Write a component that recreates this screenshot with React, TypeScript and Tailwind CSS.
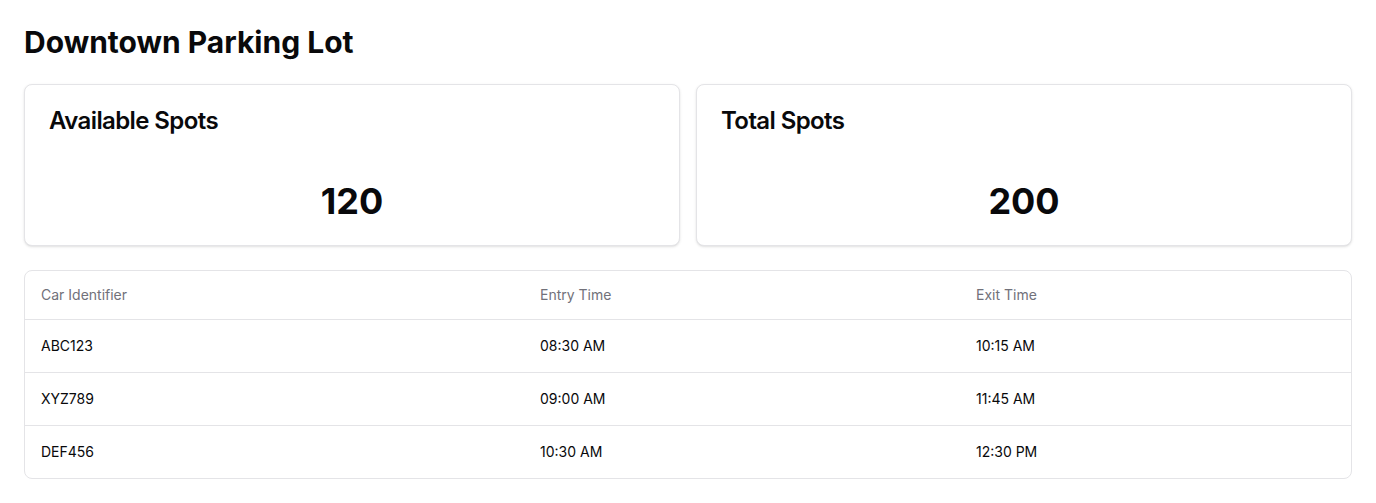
import React from "react";

const rows = [
  { id: "ABC123", entry: "08:30 AM", exit: "10:15 AM" },
  { id: "XYZ789", entry: "09:00 AM", exit: "11:45 AM" },
  { id: "DEF456", entry: "10:30 AM", exit: "12:30 PM" },
];

function StatCard({ title, value }: { title: string; value: string }) {
  return (
    <div className="flex-1 rounded-lg border border-[#e4e4e7] bg-white text-[#09090b] shadow-sm">
      <div className="p-6">
        <h3 className="text-2xl font-semibold leading-none tracking-tight">{title}</h3>
      </div>
      <div className="p-6">
        <div className="text-center text-4xl font-bold">{value}</div>
      </div>
    </div>
  );
}

export default function App() {
  return (
    <div
      className="min-h-screen bg-white p-6 text-[#09090b]"
      style={{ fontFamily: "Inter, 'Noto Sans', sans-serif" }}
    >
      <h1 className="mb-6 text-3xl font-bold">Downtown Parking Lot</h1>
      <div className="flex gap-4">
        <StatCard title="Available Spots" value="120" />
        <StatCard title="Total Spots" value="200" />
      </div>
      <div className="mt-6 overflow-hidden rounded-lg border border-[#e4e4e7]">
        <table className="w-full caption-bottom text-sm">
          <thead>
            <tr className="border-b border-[#e4e4e7]">
              <th className="h-12 w-[499px] px-4 text-left align-middle font-normal text-[#71717a]">Car Identifier</th>
              <th className="h-12 w-[436px] px-4 text-left align-middle font-normal text-[#71717a]">Entry Time</th>
              <th className="h-12 px-4 text-left align-middle font-normal text-[#71717a]">Exit Time</th>
            </tr>
          </thead>
          <tbody>
            {rows.map((r, i) => (
              <tr key={r.id} className={i < rows.length - 1 ? "border-b border-[#e4e4e7]" : ""}>
                <td className="p-4 align-middle">{r.id}</td>
                <td className="p-4 align-middle">{r.entry}</td>
                <td className="p-4 align-middle">{r.exit}</td>
              </tr>
            ))}
          </tbody>
        </table>
      </div>
    </div>
  );
}
